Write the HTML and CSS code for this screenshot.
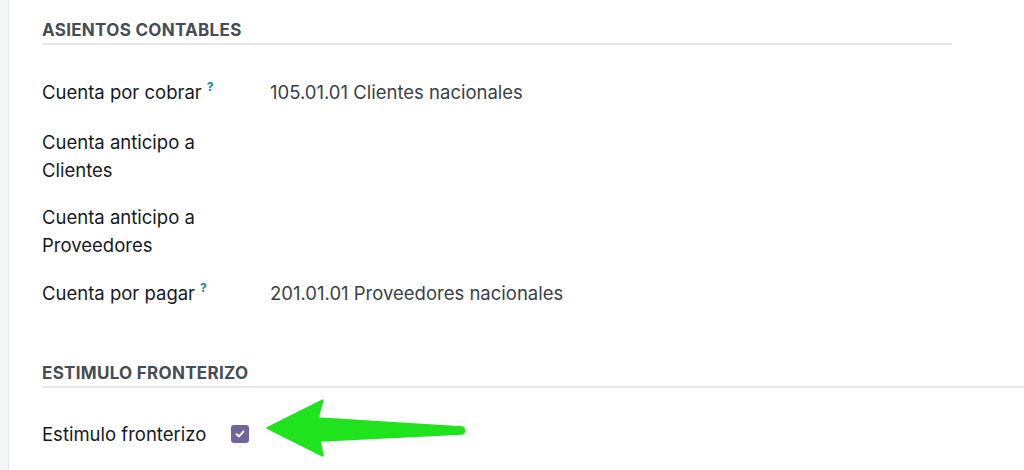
FILE: index.html
```html
<!DOCTYPE html>
<html lang="es">
<head>
    <meta charset="UTF-8">
    <meta name="viewport" content="width=device-width, initial-scale=1.0">
    <title>Contabilidad - Ajustes</title>
    <link rel="stylesheet" href="styles.css">
</head>
<body>
    <div class="page">
        <aside class="side-strip"></aside>
        <main class="sheet">
            <section class="group">
                <h2 class="group-title short">Asientos contables</h2>
                <div class="field first">
                    <div class="field-label">Cuenta por cobrar<span class="help">?</span></div>
                    <div class="field-value">105.01.01 Clientes nacionales</div>
                </div>
                <div class="field tight">
                    <div class="field-label">Cuenta anticipo a Clientes</div>
                    <div class="field-value"></div>
                </div>
                <div class="field">
                    <div class="field-label">Cuenta anticipo a Proveedores</div>
                    <div class="field-value"></div>
                </div>
                <div class="field">
                    <div class="field-label">Cuenta por pagar<span class="help">?</span></div>
                    <div class="field-value">201.01.01 Proveedores nacionales</div>
                </div>
            </section>

            <section class="group second">
                <h2 class="group-title">Estimulo fronterizo</h2>
                <div class="field check-row">
                    <div class="field-label">Estimulo fronterizo</div>
                    <div class="field-value">
                        <span class="checkbox">
                            <svg width="12" height="12" viewBox="0 0 12 12">
                                <path d="M2.6 6.2 L5 8.4 L9.4 3.6" fill="none" stroke="#fff" stroke-width="2" stroke-linecap="round" stroke-linejoin="round"/>
                            </svg>
                        </span>
                    </div>
                </div>
            </section>
        </main>
    </div>

    <!-- annotation arrow drawn over the screenshot -->
    <svg class="arrow" width="210" height="62" viewBox="262 398 210 62">
        <path d="M267 428 L323 400 L318 418 L462 427 Q468 430.5 462 434 L320 441 L323 456 Z" fill="#1fe31c" stroke="#1fe31c" stroke-width="1.5" stroke-linejoin="round"/>
    </svg>
</body>
</html>
```

FILE: styles.css
```css
body {
    margin: 0;
    padding: 0;
    font-family: Inter, "Noto Sans", sans-serif;
    background-color: #ffffff;
    color: #111827;
}
.page {
    display: flex;
    min-height: 470px;
}
.side-strip {
    width: 8px;
    flex-shrink: 0;
    background-color: #f5f6f8;
    border-right: 1px solid #e4e6ea;
}
.sheet {
    flex: 1;
    display: flex;
    flex-direction: column;
    padding-left: 33px;
}
.group-title {
    margin: 0;
    padding-top: 20px;
    padding-bottom: 3px;
    font-size: 17px;
    line-height: 20px;
    font-weight: 700;
    text-transform: uppercase;
    color: #454c55;
    border-bottom: 2px solid #e8e9eb;
    letter-spacing: 0.3px;
}
.group-title.short {
    width: 910px;
}
.field {
    display: flex;
    align-items: flex-start;
    margin-bottom: 20px;
    font-size: 18.5px;
    line-height: 28px;
}
.field.first {
    margin-top: 33px;
    margin-bottom: 19px;
}
.field.tight {
    margin-bottom: 19px;
}
.field-label {
    width: 208px;
    padding-right: 20px;
    flex-shrink: 0;
    color: #15191f;
}
.field-value {
    color: #3a3f47;
}
.help {
    position: relative;
    top: -8px;
    margin-left: 5px;
    color: #0b8a93;
    font-size: 12px;
    font-weight: 700;
}
.group.second {
    margin-top: 33px;
}
.group.second .group-title {
    padding-top: 0;
}
.check-row {
    margin-top: 32px;
    align-items: center;
}
.check-row .field-label {
    width: 169px;
}
.checkbox {
    display: flex;
    align-items: center;
    justify-content: center;
    width: 18px;
    height: 18px;
    border-radius: 3px;
    background-color: #71639e;
}
.arrow {
    position: absolute;
    left: 262px;
    top: 398px;
}
```
